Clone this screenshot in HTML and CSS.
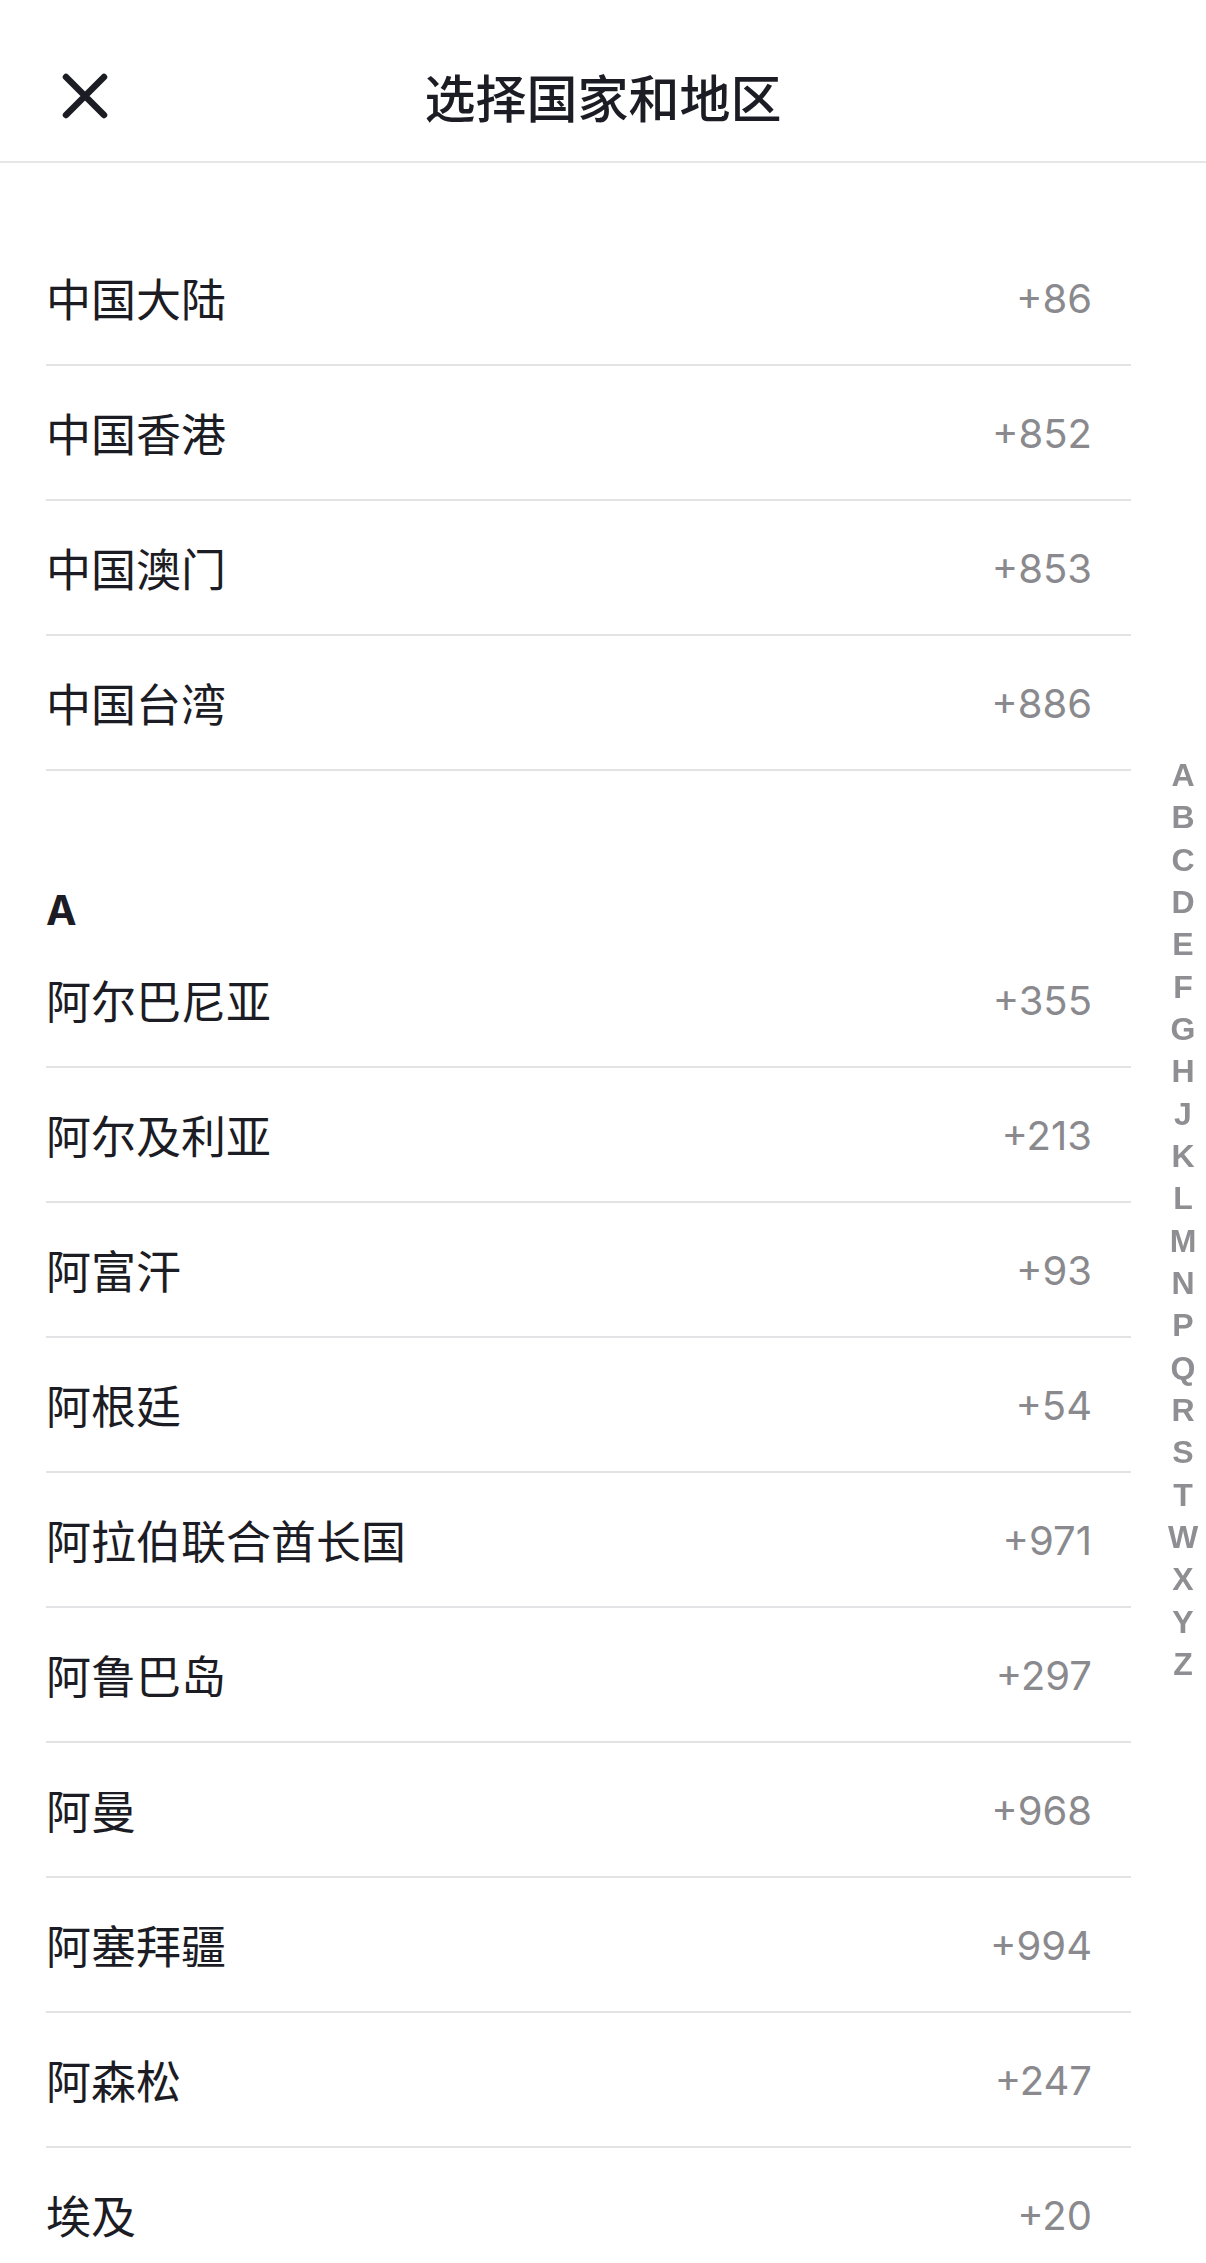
FILE: index.html
```html
<!DOCTYPE html>
<html lang="zh-CN">
<head>
    <meta charset="UTF-8">
    <meta name="viewport" content="width=device-width, initial-scale=1.0">
    <title>选择国家和地区</title>
    <link rel="stylesheet" href="styles.css">
</head>
<body>
    <header class="topbar">
        <button class="close-btn" aria-label="关闭">
            <svg width="46" height="46" viewBox="0 0 46 46">
                <path d="M4 4 L42 42 M42 4 L4 42" stroke="#1c1c24" stroke-width="6.5" stroke-linecap="round" fill="none"/>
            </svg>
        </button>
        <h1 class="title">选择国家和地区</h1>
        <span></span>
    </header>

    <main class="list">
        <div class="group">
            <div class="row"><span class="name">中国大陆</span><span class="code">+86</span></div>
            <div class="row"><span class="name">中国香港</span><span class="code">+852</span></div>
            <div class="row"><span class="name">中国澳门</span><span class="code">+853</span></div>
            <div class="row"><span class="name">中国台湾</span><span class="code">+886</span></div>
        </div>

        <div class="group">
            <div class="section-title">A</div>
            <div class="row"><span class="name">阿尔巴尼亚</span><span class="code">+355</span></div>
            <div class="row"><span class="name">阿尔及利亚</span><span class="code">+213</span></div>
            <div class="row"><span class="name">阿富汗</span><span class="code">+93</span></div>
            <div class="row"><span class="name">阿根廷</span><span class="code">+54</span></div>
            <div class="row"><span class="name">阿拉伯联合酋长国</span><span class="code">+971</span></div>
            <div class="row"><span class="name">阿鲁巴岛</span><span class="code">+297</span></div>
            <div class="row"><span class="name">阿曼</span><span class="code">+968</span></div>
            <div class="row"><span class="name">阿塞拜疆</span><span class="code">+994</span></div>
            <div class="row"><span class="name">阿森松</span><span class="code">+247</span></div>
            <div class="row"><span class="name">埃及</span><span class="code">+20</span></div>
        </div>
    </main>

    <!-- Alphabet index -->
    <nav class="index">
        <span>A</span><span>B</span><span>C</span><span>D</span><span>E</span><span>F</span>
        <span>G</span><span>H</span><span>J</span><span>K</span><span>L</span><span>M</span>
        <span>N</span><span>P</span><span>Q</span><span>R</span><span>S</span><span>T</span>
        <span>W</span><span>X</span><span>Y</span><span>Z</span>
    </nav>
</body>
</html>
```

FILE: styles.css
```css
/* Core Styling */
*, *:before, *:after {
    margin: 0;
    padding: 0;
    box-sizing: border-box;
}

body {
    font-family: Inter, "Noto Sans CJK SC", sans-serif;
    background-color: #fff;
    color: #1c1c24;
    overflow: hidden;
}

/* Header */
.topbar {
    display: grid;
    grid-template-columns: 1fr auto 1fr;
    align-items: center;
    height: 163px;
    padding-top: 30px;
    border-bottom: 2px solid #e6e6e8;
}

.close-btn {
    justify-self: start;
    margin-left: 62px;
    width: 46px;
    height: 46px;
    border: none;
    background: none;
    display: flex;
    cursor: pointer;
}

.title {
    font-family: "Noto Sans CJK SC", sans-serif;
    font-size: 51px;
    font-weight: 500;
}

/* List */
.list {
    padding: 68px 75px 0 46px;
}

.section-title {
    padding-top: 116px;
    line-height: 46px;
    font-size: 41px;
    font-weight: 700;
}

.row {
    display: flex;
    justify-content: space-between;
    align-items: center;
    height: 135px;
    border-bottom: 2px solid #e3e3e5;
}

.name {
    font-family: "Noto Sans CJK SC", sans-serif;
    font-size: 45px;
    color: #1c1c24;
}

.code {
    font-size: 40px;
    color: #8a8a8e;
    padding-right: 39px;
    margin-top: 2px;
}

/* Alphabet index */
.index {
    position: fixed;
    top: 754px;
    right: 0;
    width: 46px;
    display: flex;
    flex-direction: column;
    align-items: center;
}

.index span {
    line-height: 42.33px;
    font-family: "Liberation Sans", Arial, sans-serif;
    font-size: 32px;
    font-weight: 700;
    color: #8e8e93;
}
```
